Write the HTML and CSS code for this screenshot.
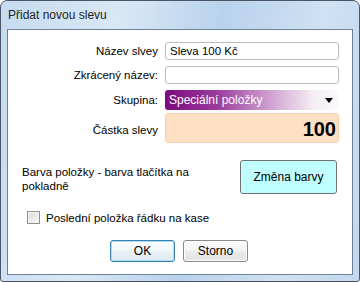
FILE: index.html
```html
<!DOCTYPE html>
<html lang="cs">
<head>
    <meta charset="UTF-8">
    <title>Přidat novou slevu</title>
    <link rel="stylesheet" href="styles.css">
</head>
<body>
    <div class="window">
        <div class="titlebar">Přidat novou slevu</div>
        <div class="client">
            <div class="form">
                <label class="lbl">Název slvey</label>
                <div class="field">Sleva 100 Kč</div>

                <label class="lbl">Zkrácený název:</label>
                <div class="field"></div>

                <label class="lbl">Skupina:</label>
                <div class="combo">
                    <span>Speciální položky</span>
                    <span class="arrow"></span>
                </div>

                <label class="lbl">Částka slevy</label>
                <div class="amount">100</div>
            </div>

            <div class="color-row">
                <div class="color-text">Barva položky - barva tlačítka na pokladně</div>
                <button class="color-btn">Změna barvy</button>
            </div>

            <div class="check-row">
                <span class="checkbox"></span>
                <span>Poslední položka řádku na kase</span>
            </div>

            <div class="buttons">
                <button class="btn default">OK</button>
                <button class="btn">Storno</button>
            </div>
        </div>
    </div>
</body>
</html>
```

FILE: styles.css
```css
html, body {
    margin: 0;
    padding: 0;
}
body {
    width: 360px;
    height: 282px;
    background: #ffffff;
    font-family: 'Liberation Sans', Arial, sans-serif;
    font-size: 11.5px;
    color: #000;
}
.window {
    box-sizing: border-box;
    width: 360px;
    height: 282px;
    border: 1px solid #4a5666;
    border-radius: 7px 7px 3px 3px;
    background: linear-gradient(100deg, #c6dbef 0%, #d9e8f6 30%, #b9d2ec 55%, #cfe1f3 80%, #c3d8ee 100%);
    padding: 0 6px 6px 6px;
    display: flex;
    flex-direction: column;
}
.titlebar {
    height: 28px;
    line-height: 29px;
    font-size: 12px;
    padding-left: 1px;
    color: #1e1e1e;
}
.client {
    flex: 1;
    background: #ffffff;
    border: 1px solid #6f8196;
    padding-top: 12px;
}
.form {
    display: grid;
    grid-template-columns: 150px 174px;
    column-gap: 7px;
    row-gap: 6px;
    align-items: center;
}
.lbl {
    text-align: right;
}
.field {
    box-sizing: border-box;
    height: 18px;
    border: 1px solid #b6bcc4;
    border-radius: 3px;
    padding: 0 4px;
    line-height: 16px;
}
.combo {
    box-sizing: border-box;
    height: 20px;
    border-radius: 3px;
    background: linear-gradient(90deg, #7d0a7f 0%, #9a3c9c 30%, #cfa0d0 60%, #f4ecf5 85%, #fbfbfb 100%);
    color: #fff;
    padding: 0 6px 0 4px;
    display: flex;
    align-items: center;
    justify-content: space-between;
    font-size: 12px;
}
.arrow {
    width: 0;
    height: 0;
    border-left: 4px solid transparent;
    border-right: 4px solid transparent;
    border-top: 5px solid #000;
}
.amount {
    box-sizing: border-box;
    height: 30px;
    margin-top: -3px;
    border: 1px solid #f2d2b2;
    border-radius: 3px;
    background: #fde0c3;
    text-align: right;
    font-weight: bold;
    font-size: 20px;
    line-height: 30px;
    padding-right: 2px;
}
.color-row {
    display: flex;
    align-items: center;
    justify-content: space-between;
    padding: 17px 15px 0 14px;
}
.color-text {
    width: 180px;
    line-height: 14px;
    padding-top: 3px;
}
.color-btn {
    box-sizing: border-box;
    width: 97px;
    height: 34px;
    border: 1px solid #707070;
    border-radius: 3px;
    background: #c0ffff;
    font-family: inherit;
    font-size: 12px;
    color: #000;
}
.check-row {
    display: flex;
    align-items: center;
    gap: 6px;
    padding: 17px 0 0 19px;
}
.checkbox {
    box-sizing: border-box;
    width: 13px;
    height: 13px;
    border: 1px solid #8e8f8f;
    background: linear-gradient(135deg, #dcdcdc 0%, #f7f7f7 100%);
    box-shadow: inset 0 0 0 1px #f4f4f4;
}
.buttons {
    display: flex;
    justify-content: center;
    gap: 8px;
    padding: 16px 0 0 0;
    margin-left: -2px;
}
.btn {
    box-sizing: border-box;
    width: 65px;
    height: 22px;
    border: 1px solid #8a8a8a;
    border-radius: 3px;
    background: linear-gradient(#fbfbfb 0%, #f3f3f3 50%, #ebebeb 51%, #e2e2e2 100%);
    box-shadow: inset 0 0 0 1px #fcfcfc;
    font-family: inherit;
    font-size: 12px;
    color: #000;
    padding: 0;
}
.btn.default {
    border-color: #3c7fb1;
    box-shadow: inset 0 0 0 1px #a9dcf6;
    background: linear-gradient(#fbfdfe 0%, #f2f8fb 50%, #e8f1f6 51%, #e0ecf3 100%);
}
```
